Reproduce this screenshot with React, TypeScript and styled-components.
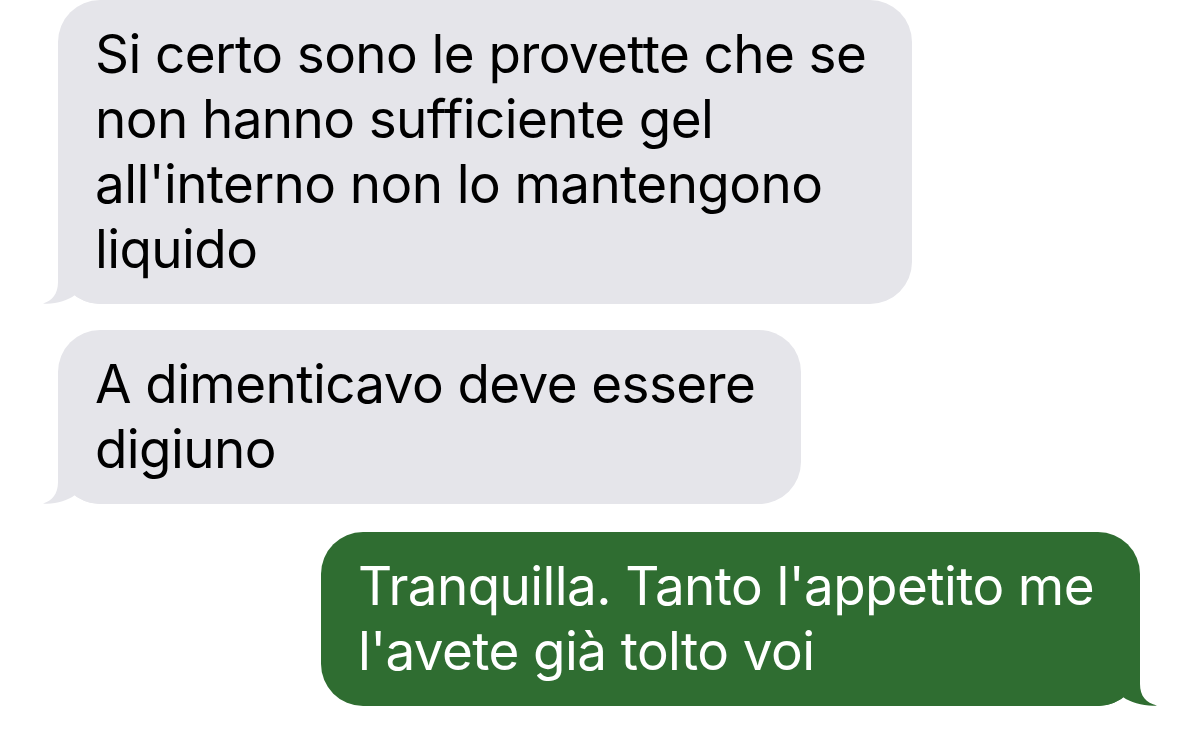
import React from "react";
import styled, { createGlobalStyle } from "styled-components";

const GlobalStyle = createGlobalStyle`
  html, body {
    margin: 0;
    padding: 0;
    background: #ffffff;
  }
  body {
    font-family: Inter, "Noto Sans", "Liberation Sans", sans-serif;
    -webkit-font-smoothing: antialiased;
  }
`;

const GRAY = "#e5e5ea";
const GREEN = "#2f6d31";

const Thread = styled.div`
  width: 1200px;
  height: 729px;
  overflow: hidden;
  display: flex;
  flex-direction: column;
  padding: 0 60px 0 58px;
  box-sizing: border-box;
`;

const Row = styled.div<{ $mine?: boolean; $gap: number }>`
  display: flex;
  justify-content: ${(p) => (p.$mine ? "flex-end" : "flex-start")};
  margin-top: ${(p) => p.$gap}px;
`;

const Bubble = styled.div<{ $mine?: boolean }>`
  position: relative;
  background: ${(p) => (p.$mine ? GREEN : GRAY)};
  color: ${(p) => (p.$mine ? "#ffffff" : "#000000")};
  border-radius: 42px;
  padding: 22px 46px 22px 37px;
  font-size: 53px;
  line-height: 65px;
  letter-spacing: -0.6px;
  white-space: nowrap;
`;

const Line = styled.span`
  position: relative;
  z-index: 1;
  display: block;
`;

const Tail = styled.svg<{ $mine?: boolean }>`
  position: absolute;
  z-index: 0;
  bottom: 0;
  width: 62px;
  height: 50px;
  ${(p) =>
    p.$mine ? "right: -17px; transform: scaleX(-1);" : "left: -15px;"}
  pointer-events: none;
`;

function BubbleTail({ mine }: { mine?: boolean }) {
  const e = mine ? 17 : 15;
  return (
    <Tail $mine={mine} viewBox="0 0 62 50">
      <path
        d={`M${e} 0 L${e} 28 C${e} 40 ${e - 6} 47 0 49.5 C12 50.5 ${e + 9} 47 ${e + 17} 41 C${e + 25} 48 ${e + 35} 50 62 50 L62 0 Z`}
        fill={mine ? GREEN : GRAY}
      />
    </Tail>
  );
}

interface MessageProps {
  lines: string[];
  mine?: boolean;
  gap: number;
}

function Message({ lines, mine, gap }: MessageProps) {
  return (
    <Row $mine={mine} $gap={gap}>
      <Bubble $mine={mine}>
        <BubbleTail mine={mine} />
        {lines.map((l, i) => (
          <Line key={i}>{l}</Line>
        ))}
      </Bubble>
    </Row>
  );
}

export default function App() {
  return (
    <>
      <GlobalStyle />
      <Thread>
        <Message
          gap={0}
          lines={[
            "Si certo sono le provette che se",
            "non hanno sufficiente gel",
            "all'interno non lo mantengono",
            "liquido",
          ]}
        />
        <Message gap={26} lines={["A dimenticavo deve essere", "digiuno"]} />
        <Message
          mine
          gap={28}
          lines={["Tranquilla. Tanto l'appetito me", "l'avete già tolto voi"]}
        />
      </Thread>
    </>
  );
}
